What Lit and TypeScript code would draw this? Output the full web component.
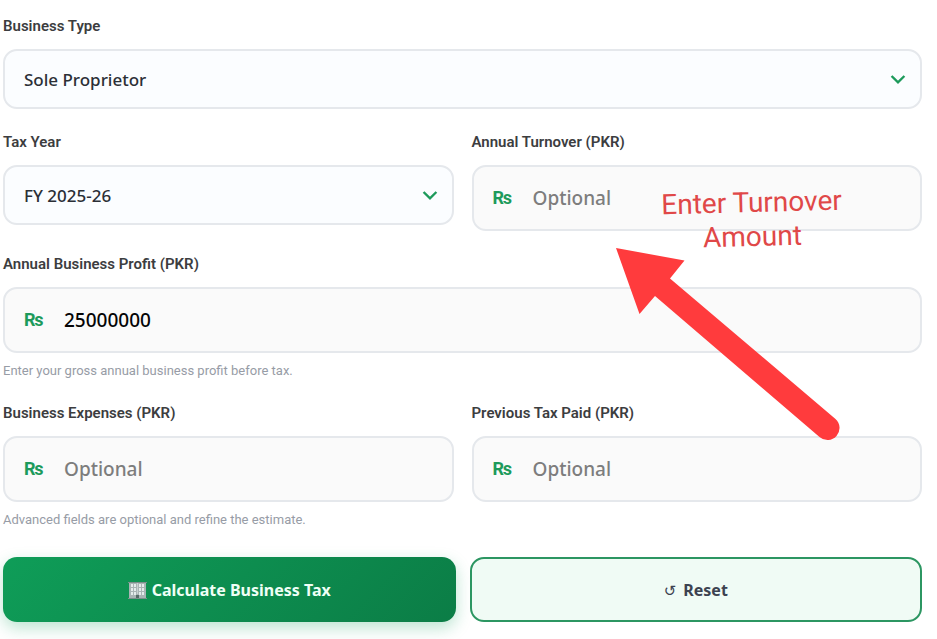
import { LitElement, html, css } from "lit";
import { customElement, property } from "lit/decorators.js";

const shared = css`
  *,
  *::before,
  *::after {
    box-sizing: border-box;
  }
  :host {
    display: block;
    min-width: 0;
    font-family: Roboto, "Liberation Sans", sans-serif;
  }
  label {
    display: block;
    margin-bottom: 13px;
    font-size: 15px;
    line-height: 20px;
    font-weight: 600;
    color: #3c3d3f;
  }
  .control {
    position: relative;
    display: flex;
    align-items: center;
    border: 2px solid #e5e8ec;
    border-radius: 14px;
  }
`;

@customElement("select-field")
class SelectField extends LitElement {
  @property() label = "";
  @property({ attribute: false }) options: string[] = [];

  static styles = [
    shared,
    css`
      .control {
        background: #fbfdff;
      }
      select {
        appearance: none;
        flex: 1;
        min-width: 0;
        height: 56px;
        padding: 0 48px 0 19px;
        border: 0;
        border-radius: 12px;
        background: transparent;
        font: 500 17px "Noto Sans", sans-serif;
        color: #2b2f36;
      }
      .chevron {
        position: absolute;
        right: 14px;
        width: 16px;
        height: 16px;
        pointer-events: none;
      }
    `,
  ];

  render() {
    return html`
      <label for="choice">${this.label}</label>
      <div class="control">
        <select id="choice">
          ${this.options.map((o) => html`<option>${o}</option>`)}
        </select>
        <svg class="chevron" viewBox="0 0 16 16" aria-hidden="true">
          <path d="M1.600 5 8 11.400 14.400 5" fill="none" stroke="#1d9a5b" stroke-width="2.400" />
        </svg>
      </div>
    `;
  }
}

@customElement("money-field")
class MoneyField extends LitElement {
  @property() label = "";
  @property() value = "";
  @property() hint = "";

  static styles = [
    shared,
    css`
      .control {
        background: #fafafa;
      }
      .currency {
        flex: none;
        width: 40px;
        margin-left: 19px;
        font-size: 18px;
        line-height: 24px;
        font-weight: 700;
        color: #1d9a5b;
      }
      input {
        flex: 1;
        min-width: 0;
        height: 62px;
        padding: 0 16px 0 0;
        border: 0;
        border-radius: 12px;
        background: transparent;
        font: 500 19px "Noto Sans", sans-serif;
        color: #050505;
      }
      input::placeholder {
        color: #7d7d7d;
        opacity: 1;
      }
      .hint {
        margin: 9px 0 0;
        font-size: 13px;
        line-height: 18px;
        color: #979ca6;
      }
    `,
  ];

  render() {
    return html`
      <label for="amount">${this.label}</label>
      <div class="control">
        <span class="currency">₨</span>
        <input id="amount" inputmode="numeric" placeholder="Optional" .value=${this.value} />
      </div>
      ${this.hint ? html`<p class="hint">${this.hint}</p>` : ""}
    `;
  }
}

@customElement("app-root")
class AppRoot extends LitElement {
  static styles = css`
    *,
    *::before,
    *::after {
      box-sizing: border-box;
    }
    :host {
      display: block;
      background: #fff;
      font-family: Roboto, "Liberation Sans", sans-serif;
    }
    form {
      display: flex;
      flex-direction: column;
      gap: 23px;
      padding: 16px 15px 17px 3px;
      overflow: hidden;
    }
    .pair {
      display: grid;
      grid-template-columns: 1fr 1fr;
      gap: 18px;
      align-items: start;
    }
    .turnover {
      position: relative;
    }
    .callout {
      position: absolute;
      top: 54px;
      left: 178px;
      z-index: 1;
      width: 204px;
      margin: 0;
      font-family: Roboto, sans-serif;
      font-size: 28px;
      line-height: 34px;
      text-align: center;
      color: #e04848;
      transform: rotate(-1.5deg);
      pointer-events: none;
    }
    .arrow {
      position: absolute;
      top: 112px;
      left: 138px;
      z-index: 1;
      width: 236px;
      height: 200px;
      pointer-events: none;
    }
    .actions {
      display: grid;
      grid-template-columns: 1fr 1fr;
      gap: 14px;
      margin-top: 5px;
    }
    button {
      display: flex;
      align-items: center;
      justify-content: center;
      gap: 5px;
      height: 65px;
      padding: 0;
      border: 0;
      border-radius: 14px;
      font: 700 16px "Noto Sans", sans-serif;
    }
    .primary {
      color: #effff6;
      background: linear-gradient(135deg, #0f9d58, #0b7d46);
      box-shadow: 0 6px 16px rgba(15, 157, 88, 0.28);
    }
    .secondary {
      gap: 7px;
      border: 2px solid #2c9662;
      background: #f0fbf5;
      color: #3c4250;
    }
    .building {
      width: 19px;
      height: 18px;
    }
    .reload {
      padding-top: 3px;
      font: 400 15px "DejaVu Sans", sans-serif;
    }
  `;

  render() {
    return html`
      <form @submit=${(e: Event) => e.preventDefault()}>
        <select-field
          label="Business Type"
          .options=${["Sole Proprietor"]}
        ></select-field>
        <div class="pair">
          <select-field label="Tax Year" .options=${["FY 2025-26"]}></select-field>
          <div class="turnover">
            <money-field label="Annual Turnover (PKR)"></money-field>
            <p class="callout">Enter Turnover Amount</p>
            <svg class="arrow" viewBox="610 244 236 200" aria-hidden="true">
              <path
                fill="#ff3b3d"
                d="M616 248 684.500 260.500 670 278.500 835.500 419A12 12 0 0 1 819.500 437L655 296 639.500 314Z"
              />
            </svg>
          </div>
        </div>
        <money-field
          label="Annual Business Profit (PKR)"
          value="25000000"
          hint="Enter your gross annual business profit before tax."
        ></money-field>
        <div class="pair">
          <money-field
            label="Business Expenses (PKR)"
            hint="Advanced fields are optional and refine the estimate."
          ></money-field>
          <money-field label="Previous Tax Paid (PKR)"></money-field>
        </div>
        <div class="actions">
          <button class="primary" type="submit">
            <svg class="building" viewBox="0 0 19 18" aria-hidden="true">
              <path fill="#a9b5b5" d="M1 1h17v17H1z" />
              <path fill="#7c8f8c" d="M0 1h19v1H0zM0 17h19v1H0z" />
              <path
                fill="#e4eceb"
                d="M3 3h2v3H3zM6 3h2v3H6zM11 3h2v3h-2zM14 3h2v3h-2zM3 7h2v3H3zM6 7h2v3H6zM11 7h2v3h-2zM14 7h2v3h-2zM3 11h2v3H3zM6 11h2v3H6zM11 11h2v3h-2zM14 11h2v3h-2z"
              />
              <path fill="#566b67" d="M8 14h3v3H8z" />
              <path fill="#c9d2d1" d="M9 2h1v11H9z" />
            </svg>
            <span>Calculate Business Tax</span>
          </button>
          <button class="secondary" type="reset">
            <span class="reload" aria-hidden="true">↺</span>
            <span>Reset</span>
          </button>
        </div>
      </form>
    `;
  }
}
